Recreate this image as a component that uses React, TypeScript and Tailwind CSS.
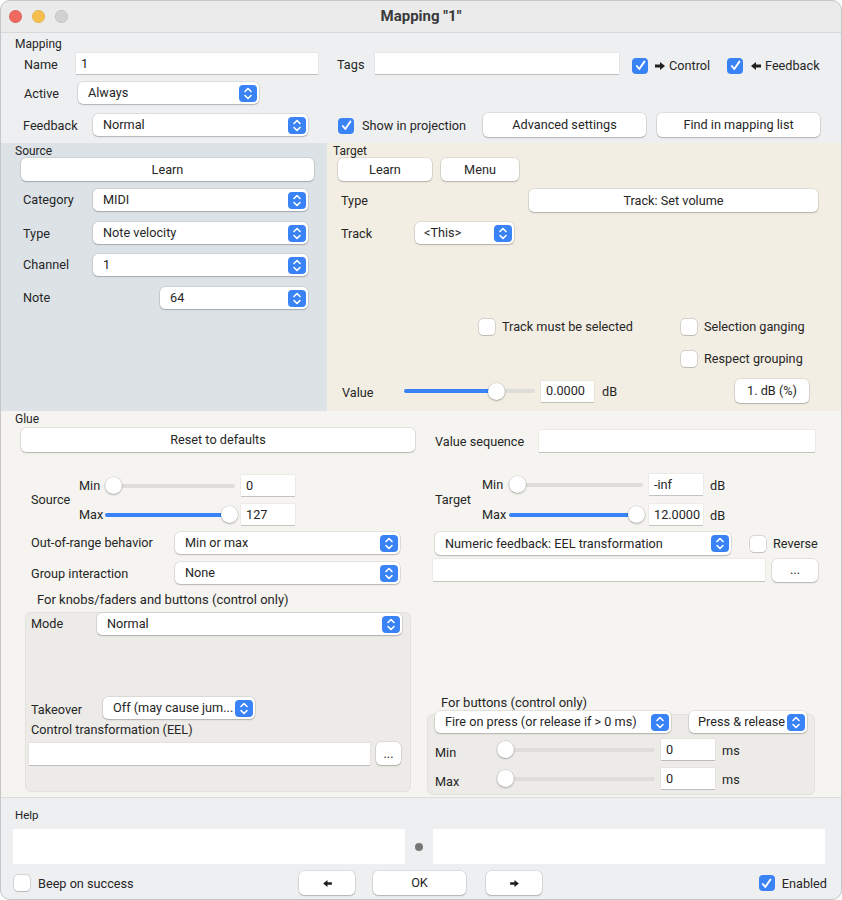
import React from 'react';

const ctrlShadow = 'shadow-[0_0_0_0.5px_rgba(0,0,0,0.14),0_1px_1.5px_rgba(0,0,0,0.2)]';

function Chevrons() {
  return (
    <span className="flex h-[17px] w-[18px] shrink-0 items-center justify-center rounded-[4px] bg-[#3a83f6]">
      <svg width="10" height="13" viewBox="0 0 10 13" fill="none" stroke="white" strokeWidth="1.6" strokeLinecap="round" strokeLinejoin="round">
        <path d="M2 4.5 L5 1.5 L8 4.5" />
        <path d="M2 8.5 L5 11.5 L8 8.5" />
      </svg>
    </span>
  );
}

const Select = ({ value, className = '' }: { value: string; className?: string }) => (
  <div className={`flex h-[22px] shrink-0 items-center rounded-[5px] bg-white pr-[2px] ${ctrlShadow} ${className}`}>
    <span className="flex-1 overflow-hidden whitespace-nowrap">{value}</span>
    <Chevrons />
  </div>
);

const Button = ({ children, className = '' }: { children?: React.ReactNode; className?: string }) => (
  <div className={`flex shrink-0 items-center justify-center rounded-[5px] bg-white ${ctrlShadow} ${className}`}>{children}</div>
);

const Input = ({ value = '', className = '' }: { value?: string; className?: string }) => (
  <div className={`flex shrink-0 items-center bg-white pl-[5px] shadow-[0_0_0_0.5px_rgba(0,0,0,0.07),0_1px_0_rgba(0,0,0,0.17)] ${className}`}>{value}</div>
);

const Check = ({ checked = false, className = '' }: { checked?: boolean; className?: string }) =>
  checked ? (
    <span className={`flex h-[16px] w-[16px] shrink-0 items-center justify-center rounded-[4px] bg-[#3a83f6] ${className}`}>
      <svg width="11" height="11" viewBox="0 0 11 11" fill="none" stroke="white" strokeWidth="1.9" strokeLinecap="round" strokeLinejoin="round">
        <path d="M1.8 6 L4.3 9 L9.4 1.6" />
      </svg>
    </span>
  ) : (
    <span className={`h-[16px] w-[16px] shrink-0 rounded-[4px] bg-white shadow-[0_0_0_0.5px_rgba(0,0,0,0.22),0_0.5px_1px_rgba(0,0,0,0.12)] ${className}`} />
  );

const Slider = ({ pos, className = '' }: { pos: number; className?: string }) => (
  <div className={`relative flex h-[17px] shrink-0 items-center ${className}`}>
    <div className="h-[4px] w-full rounded-full bg-[#dfddd9]" />
    <div className="absolute left-0 top-[6.5px] h-[4px] rounded-full bg-[#3a83f6]" style={{ width: pos }} />
    <div
      className="absolute top-0 h-[17px] w-[17px] rounded-full bg-white shadow-[0_0_0_0.5px_rgba(0,0,0,0.15),0_1px_2px_rgba(0,0,0,0.25)]"
      style={{ left: pos - 8.5 }}
    />
  </div>
);

const Arrow = ({ left = false, small = false }: { left?: boolean; small?: boolean }) => (
  <svg
    width={small ? 9 : 10}
    height={small ? 7 : 8}
    viewBox="0 0 10 8"
    className={left ? 'rotate-180' : ''}
  >
    <path d="M0 2.6H5V0L10 4L5 8V5.4H0Z" fill="#1f1f1f" />
  </svg>
);

export default function App() {
  return (
    <div className="h-[900px] w-[842px] bg-white font-['Roboto',sans-serif] text-[12.7px] leading-[16px] text-[#262626]">
      <div className="flex h-full flex-col overflow-hidden rounded-[10px] outline outline-1 -outline-offset-1 outline-[#c6c6c6]">
        {/* title bar */}
        <div className="grid h-[33px] shrink-0 grid-cols-[1fr_auto_1fr] items-center border-b border-[#d9d9d9] bg-[#ebebeb]">
          <div className="flex items-center gap-[10px] pl-[9px]">
            <span className="h-[13px] w-[13px] rounded-full bg-[#ee6a5f] shadow-[inset_0_0_0_0.5px_rgba(0,0,0,0.12)]" />
            <span className="h-[13px] w-[13px] rounded-full bg-[#f5bf4f] shadow-[inset_0_0_0_0.5px_rgba(0,0,0,0.12)]" />
            <span className="h-[13px] w-[13px] rounded-full bg-[#d2d1d0] shadow-[inset_0_0_0_0.5px_rgba(0,0,0,0.12)]" />
          </div>
          <div className="text-[15px] font-bold text-[#3a3a3a]">Mapping "1"</div>
          <div />
        </div>

        {/* mapping */}
        <div className="h-[110px] shrink-0 bg-[#eeeff1]">
          <div className="pl-[15px] pt-[4px] text-[12px] leading-[14px]">Mapping</div>
          <div className="mt-[2px] flex h-[21px] items-center pl-[24px]">
            <span className="w-[52px] pt-[2px]">Name</span>
            <Input value="1" className="h-[21px] w-[242px]" />
            <span className="ml-[19px] w-[38px] pt-[2px]">Tags</span>
            <Input className="h-[21px] w-[244px]" />
            <Check checked className="ml-[13px] mt-[4px]" />
            <span className="ml-[7px] flex w-[72px] items-center gap-[4px] pt-[4px]">
              <Arrow />
              Control
            </span>
            <Check checked className="mt-[4px]" />
            <span className="ml-[8px] flex items-center gap-[4px] pt-[4px]">
              <Arrow left />
              Feedback
            </span>
          </div>
          <div className="mt-[8px] flex h-[22px] items-center pl-[24px]">
            <span className="w-[54px] pt-[1px]">Active</span>
            <Select value="Always" className="w-[181px] pl-[10px]" />
          </div>
          <div className="mt-[9px] flex h-[24px] items-center pl-[23px]">
            <span className="w-[70px] pt-[1px]">Feedback</span>
            <Select value="Normal" className="w-[215px] pl-[10px]" />
            <Check checked className="ml-[30px] mt-[1px]" />
            <span className="ml-[8px] w-[121px] pt-[2px]">Show in projection</span>
            <Button className="h-[24px] w-[163px]">Advanced settings</Button>
            <Button className="ml-[11px] h-[24px] w-[163px]">Find in mapping list</Button>
          </div>
        </div>

        {/* source / target */}
        <div className="flex h-[268px] shrink-0">
          <div className="w-[327px] shrink-0 bg-[#dce2e6]">
            <div className="pl-[15px] pt-[1px] text-[12px] leading-[14px]">Source</div>
            <Button className="ml-[21px] h-[23px] w-[293px]">Learn</Button>
            <div className="mt-[8px] flex h-[22px] items-center pl-[23px]">
              <span className="w-[70px]">Category</span>
              <Select value="MIDI" className="w-[215px] pl-[10px]" />
            </div>
            <div className="mt-[11px] flex h-[22px] items-center pl-[23px]">
              <span className="w-[70px] pt-[1px]">Type</span>
              <Select value="Note velocity" className="w-[215px] pl-[10px]" />
            </div>
            <div className="mt-[10px] flex h-[22px] items-center pl-[23px]">
              <span className="w-[70px]">Channel</span>
              <Select value="1" className="w-[215px] pl-[10px]" />
            </div>
            <div className="mt-[11px] flex h-[22px] items-center pl-[23px]">
              <span className="w-[137px]">Note</span>
              <Select value="64" className="w-[148px] pl-[10px]" />
            </div>
          </div>

          <div className="flex-1 bg-[#f3eee4]">
            <div className="pl-[6px] pt-[1px] text-[12px] leading-[14px]">Target</div>
            <div className="flex h-[23px] pl-[11px]">
              <Button className="h-[23px] w-[94px]">Learn</Button>
              <Button className="ml-[9px] h-[23px] w-[78px]">Menu</Button>
            </div>
            <div className="mt-[8px] flex h-[23px] items-center pl-[14px]">
              <span className="w-[188px]">Type</span>
              <Button className="h-[23px] w-[289px]">Track: Set volume</Button>
            </div>
            <div className="mt-[10px] flex h-[22px] items-center pl-[14px]">
              <span className="w-[74px] pt-[1px]">Track</span>
              <Select value="<This>" className="w-[99px] pl-[9px]" />
            </div>
            <div className="mt-[75px] flex h-[16px] items-center pl-[152px]">
              <Check />
              <span className="ml-[7px] w-[179px]">Track must be selected</span>
              <Check />
              <span className="ml-[7px]">Selection ganging</span>
            </div>
            <div className="mt-[16px] flex h-[16px] items-center pl-[354px]">
              <Check />
              <span className="ml-[7px]">Respect grouping</span>
            </div>
            <div className="mt-[12px] flex h-[24px] items-center pl-[15px]">
              <span className="w-[62px] pt-[3px]">Value</span>
              <Slider pos={92} className="w-[131px]" />
              <Input value="0.0000" className="ml-[6px] h-[21px] w-[53px]" />
              <span className="ml-[8px] pt-[2px]">dB</span>
              <Button className="ml-auto mr-[33px] h-[24px] w-[74px]">1. dB (%)</Button>
            </div>
          </div>
        </div>

        {/* glue */}
        <div className="flex h-[386px] shrink-0 bg-[#f5f4f0]">
          <div className="w-[420px] shrink-0">
            <div className="pl-[15px] pt-[1px] text-[12px] leading-[14px]">Glue</div>
            <Button className="ml-[21px] mt-[2px] h-[24px] w-[394px]">Reset to defaults</Button>
            <div className="ml-[31px] mt-[23px] flex items-center">
              <span className="w-[48px]">Source</span>
              <div className="flex flex-col gap-[8px]">
                <div className="flex h-[21px] items-center">
                  <span className="w-[26px]">Min</span>
                  <Slider pos={8.5} className="w-[130px]" />
                  <Input value="0" className="ml-[6px] h-[21px] w-[54px]" />
                </div>
                <div className="flex h-[21px] items-center">
                  <span className="w-[26px]">Max</span>
                  <Slider pos={124} className="w-[130px]" />
                  <Input value="127" className="ml-[6px] h-[21px] w-[54px]" />
                </div>
              </div>
            </div>
            <div className="mt-[7px] flex h-[22px] items-center pl-[31px]">
              <span className="w-[144px]">Out-of-range behavior</span>
              <Select value="Min or max" className="w-[225px] pl-[10px]" />
            </div>
            <div className="mt-[8px] flex h-[22px] items-center pl-[31px]">
              <span className="w-[144px] pt-[2px]">Group interaction</span>
              <Select value="None" className="w-[225px] pl-[10px]" />
            </div>
            <div className="mt-[9px] pl-[37px] text-[13px] leading-[14px]">For knobs/faders and buttons (control only)</div>
            <div className="ml-[25px] mt-[5px] h-[180px] w-[386px] rounded-[6px] border border-[#e2e1dd] bg-[#ecebe8]">
              <div className="flex h-[22px] items-center pl-[5px]">
                <span className="w-[66px]">Mode</span>
                <Select value="Normal" className="w-[305px] pl-[10px]" />
              </div>
              <div className="mt-[62px] flex h-[22px] items-center pl-[5px]">
                <span className="w-[72px] pt-[4px]">Takeover</span>
                <Select value="Off (may cause jum..." className="w-[152px] pl-[10px]" />
              </div>
              <div className="mt-[4px] pl-[5px] leading-[14px]">Control transformation (EEL)</div>
              <div className="mt-[5px] flex h-[23px] items-center pl-[3px]">
                <Input className="h-[22px] w-[341px]" />
                <Button className="ml-[6px] h-[23px] w-[25px]">...</Button>
              </div>
            </div>
          </div>

          <div className="flex-1">
            <div className="mt-[19px] flex h-[22px] items-center pl-[15px]">
              <span className="w-[104px] pt-[1px]">Value sequence</span>
              <Input className="h-[22px] w-[276px]" />
            </div>
            <div className="ml-[15px] mt-[22px] flex items-center">
              <span className="w-[47px]">Target</span>
              <div className="flex flex-col gap-[9px]">
                <div className="flex h-[21px] items-center">
                  <span className="w-[27px]">Min</span>
                  <Slider pos={8.5} className="w-[134px]" />
                  <Input value="-inf" className="ml-[6px] h-[21px] w-[54px]" />
                  <span className="ml-[7px] pt-[3px]">dB</span>
                </div>
                <div className="flex h-[21px] items-center">
                  <span className="w-[27px]">Max</span>
                  <Slider pos={127} className="w-[134px]" />
                  <Input value="12.0000" className="ml-[6px] h-[21px] w-[54px]" />
                  <span className="ml-[7px] pt-[3px]">dB</span>
                </div>
              </div>
            </div>
            <div className="mt-[7px] flex h-[23px] items-center pl-[15px]">
              <Select value="Numeric feedback: EEL transformation" className="h-[23px] w-[296px] pl-[10px]" />
              <Check className="ml-[19px]" />
              <span className="ml-[7px]">Reverse</span>
            </div>
            <div className="mt-[3px] flex h-[24px] items-center pl-[13px]">
              <Input className="h-[22px] w-[332px]" />
              <Button className="ml-[7px] h-[23px] w-[46px]">...</Button>
            </div>
            <div className="mt-[114px] pl-[21px] text-[13px] leading-[14px]">For buttons (control only)</div>
            <div className="ml-[7px] mt-[4px] h-[81px] w-[388px] rounded-[6px] border border-[#e2e1dd] bg-[#ecebe8]">
              <div className="-mt-[4px] flex h-[22px] items-center pl-[7px]">
                <Select value="Fire on press (or release if > 0 ms)" className="w-[236px] pl-[10px]" />
                <Select value="Press & release" className="ml-[18px] w-[118px] pl-[9px]" />
              </div>
              <div className="mt-[6px] flex h-[21px] items-center pl-[7px]">
                <span className="w-[62px] pt-[6px]">Min</span>
                <Slider pos={8.5} className="w-[158px]" />
                <Input value="0" className="ml-[6px] h-[21px] w-[54px]" />
                <span className="ml-[7px] pt-[3px]">ms</span>
              </div>
              <div className="mt-[8px] flex h-[21px] items-center pl-[7px]">
                <span className="w-[62px] pt-[6px]">Max</span>
                <Slider pos={8.5} className="w-[158px]" />
                <Input value="0" className="ml-[6px] h-[21px] w-[54px]" />
                <span className="ml-[7px] pt-[3px]">ms</span>
              </div>
            </div>
          </div>
        </div>

        {/* help */}
        <div className="flex-1 border-t border-[#dddddd] bg-[#eeeff1]">
          <div className="pl-[15px] pt-[10px] text-[11.5px] leading-[14px]">Help</div>
          <div className="mt-[7px] flex h-[35px] items-center pl-[13px]">
            <div className="h-[35px] w-[392px] bg-white" />
            <div className="flex w-[28px] justify-center">
              <span className="h-[8px] w-[8px] rounded-full bg-[#777777]" />
            </div>
            <div className="h-[35px] w-[392px] bg-white" />
          </div>
          <div className="mt-[7px] flex h-[24px] items-center">
            <div className="flex w-[299px] shrink-0 items-center pl-[14px]">
              <Check />
              <span className="ml-[8px] pt-[1px]">Beep on success</span>
            </div>
            <Button className="h-[24px] w-[56px]">
              <Arrow left small />
            </Button>
            <Button className="ml-[18px] h-[24px] w-[93px]">OK</Button>
            <Button className="ml-[20px] h-[24px] w-[56px]">
              <Arrow small />
            </Button>
            <div className="ml-auto flex items-center pr-[15px]">
              <Check checked />
              <span className="ml-[7px] pt-[1px]">Enabled</span>
            </div>
          </div>
        </div>
      </div>
    </div>
  );
}
